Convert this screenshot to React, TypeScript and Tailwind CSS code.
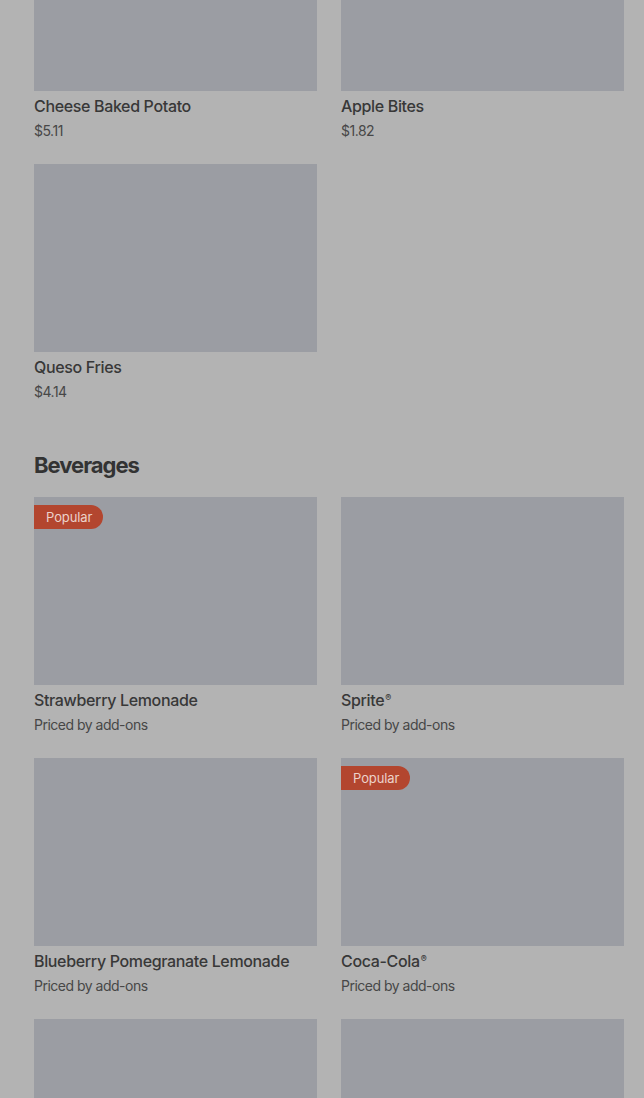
import React from "react";

type Item = { name?: string; reg?: boolean; price?: string; popular?: boolean };

const sides: Item[] = [
  { name: "Cheese Baked Potato", price: "$5.11" },
  { name: "Apple Bites", price: "$1.82" },
  { name: "Queso Fries", price: "$4.14" },
];

const beverages: Item[] = [
  { name: "Strawberry Lemonade", price: "Priced by add-ons", popular: true },
  { name: "Sprite", reg: true, price: "Priced by add-ons" },
  { name: "Blueberry Pomegranate Lemonade", price: "Priced by add-ons" },
  { name: "Coca-Cola", reg: true, price: "Priced by add-ons", popular: true },
  {},
  {},
];

function Card({ item }: { item: Item }) {
  return (
    <div className="flex flex-col">
      <div className="relative h-[188px] bg-[#9b9da3]">
        {item.popular && (
          <div className="absolute left-0 top-[8px] flex h-[24px] items-center rounded-r-full bg-[#b3462f] pl-[12px] pr-[11px] text-[13px] leading-none tracking-[-0.1px] text-[#ecd2ca]">
            Popular
          </div>
        )}
      </div>
      {item.name && (
        <>
          <div className="mt-[5px] text-[16px] font-medium leading-[20px] tracking-[-0.35px] text-[#383838]">
            {item.name}
            {item.reg && (
              <span className="relative -top-[5px] ml-[1px] text-[9px] leading-none">®</span>
            )}
          </div>
          <div className="mt-[5px] text-[14px] leading-[20px] tracking-[-0.5px] text-[#474747]">
            {item.price}
          </div>
        </>
      )}
    </div>
  );
}

export default function App() {
  return (
    <div
      className="h-[1098px] overflow-hidden bg-[#b3b3b3] pl-[34px] pr-[20px]"
      style={{ fontFamily: "Inter, 'Noto Sans', sans-serif" }}
    >
      <div className="-mt-[97px] grid grid-cols-2 gap-x-[24px] gap-y-[23px]">
        {sides.map((it, i) => (
          <Card key={i} item={it} />
        ))}
      </div>
      <h2 className="mt-[49px] text-[22px] font-bold leading-[28px] tracking-[-1px] text-[#333333]">
        Beverages
      </h2>
      <div className="mt-[18px] grid grid-cols-2 gap-x-[24px] gap-y-[23px]">
        {beverages.map((it, i) => (
          <Card key={i} item={it} />
        ))}
      </div>
    </div>
  );
}
